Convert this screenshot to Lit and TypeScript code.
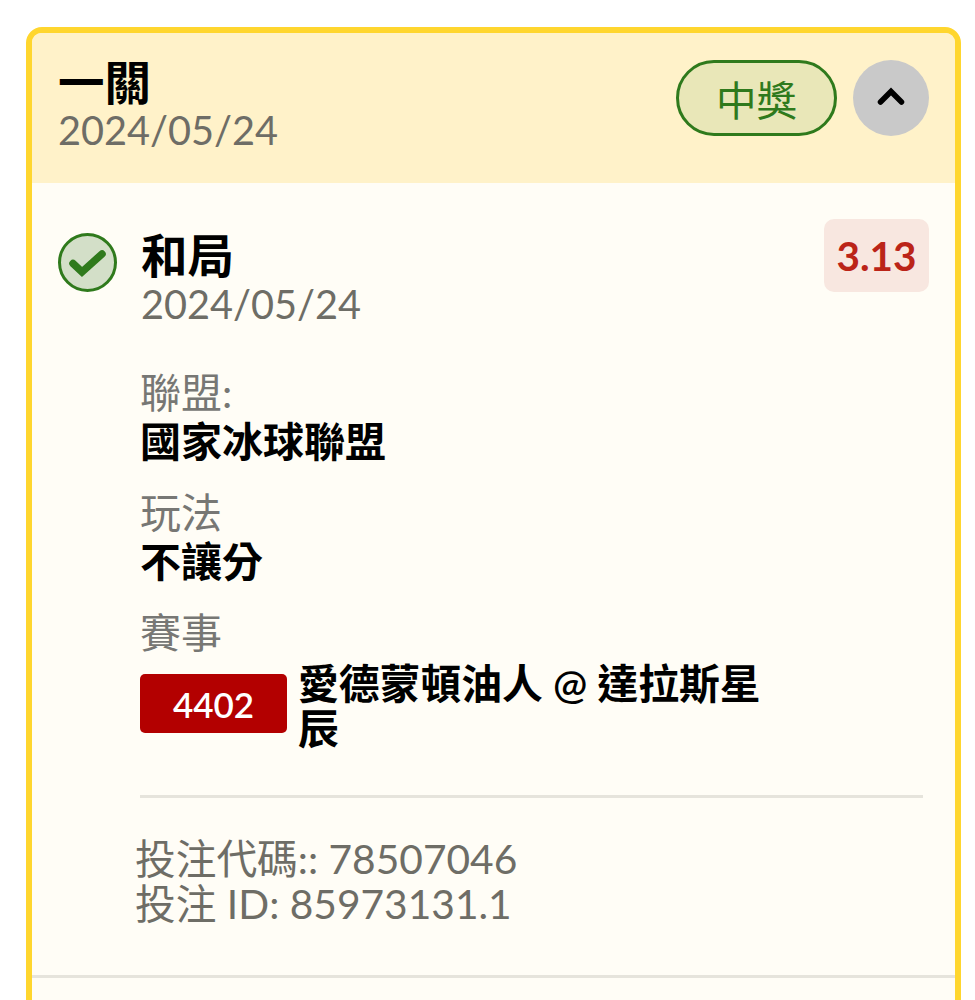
import { html, css, LitElement } from "lit";
import { customElement } from "lit/decorators.js";

@customElement("app-root")
export class AppRoot extends LitElement {
  static styles = css`
    :host {
      display: block;
      height: 1000px;
      overflow: hidden;
      background: #fff;
      font-family: Lato, "Noto Sans CJK TC", sans-serif;
      color: #000;
    }
    .Page {
      padding: 27px 14px 0 26px;
    }
    .Card {
      border: 6px solid #ffd62e;
      border-radius: 16px;
      background: #fffdf6;
      height: 1100px;
    }
    .Header {
      display: flex;
      justify-content: space-between;
      height: 150px;
      padding: 27px 26px 0 26px;
      box-sizing: border-box;
      background: #fff2c9;
      border-radius: 9px 9px 0 0;
    }
    .Header-text {
      margin-top: -2px;
    }
    .Title {
      font-size: 46.5px;
      line-height: 48px;
      font-weight: 600;
    }
    .Date {
      font-size: 39.7px;
      line-height: 48px;
      color: #6e6d66;
    }
    .Header-right {
      display: flex;
      gap: 16px;
    }
    .Badge {
      width: 161px;
      height: 76px;
      box-sizing: border-box;
      border: 3px solid #2f7a1c;
      border-radius: 38px;
      background: #e9e7b8;
      color: #2f7a1c;
      font-size: 40.5px;
      display: flex;
      align-items: center;
      justify-content: center;
    }
    .Toggle {
      width: 76px;
      height: 76px;
      border-radius: 50%;
      background: #c9c9c9;
      display: flex;
      align-items: center;
      justify-content: center;
    }
    .Body {
      padding: 36px 26px 0 26px;
    }
    .Bet-head {
      display: flex;
      align-items: flex-start;
    }
    .Check {
      margin-top: 14px;
      margin-right: 24px;
      flex: none;
    }
    .Bet-main {
      flex: 1;
      padding-top: 12px;
    }
    .Bet-main .Date {
      margin-top: 1px;
    }
    .Odds {
      width: 105px;
      height: 73px;
      border-radius: 10px;
      background: #f8e7e0;
      color: #bb2418;
      font-size: 40.5px;
      font-weight: 700;
      display: flex;
      align-items: center;
      justify-content: center;
    }
    .Details {
      padding-left: 82px;
      margin-top: 40px;
    }
    .Label {
      font-size: 41px;
      line-height: 50px;
      color: #777774;
    }
    .Value {
      font-size: 41px;
      line-height: 48px;
      font-weight: 600;
      margin-bottom: 22px;
    }
    .Event {
      display: flex;
      align-items: flex-start;
      gap: 11px;
      width: 632px;
    }
    .Event-id {
      flex: none;
      width: 147px;
      height: 59px;
      margin-top: 16px;
      border-radius: 5px;
      background: #b30000;
      color: #fff;
      font-size: 35px;
      font-weight: 600;
      display: flex;
      align-items: center;
      justify-content: center;
    }
    .Event-name {
      font-size: 40.8px;
      line-height: 45px;
      font-weight: 600;
      padding-top: 3px;
    }
    .Divider {
      height: 3px;
      background: #e6e4dc;
      margin: 44px 6px 0 82px;
    }
    .Codes {
      padding-left: 77px;
      margin-top: 38px;
      font-size: 40.7px;
      line-height: 45px;
      color: #6e6d66;
    }
    .Foot-line {
      height: 3px;
      background: #e6e4dc;
      margin-top: 49px;
    }
  `;

  render() {
    return html`<div class="Page">
      <div class="Card">
        <div class="Header">
          <div class="Header-text">
            <div class="Title">一關</div>
            <div class="Date">2024/05/24</div>
          </div>
          <div class="Header-right">
            <div class="Badge">中獎</div>
            <div class="Toggle">
              <svg width="32" height="22" viewBox="0 0 32 22">
                <path d="M5.5 15 L16 4.5 L26.5 15" fill="none" stroke="#000" stroke-width="5.5" stroke-linecap="round" stroke-linejoin="miter" />
              </svg>
            </div>
          </div>
        </div>
        <div class="Body">
          <div class="Bet-head">
            <svg class="Check" width="59" height="59" viewBox="0 0 59 59">
              <circle cx="29.5" cy="29.5" r="28" fill="#d3dfc8" stroke="#2f7a1c" stroke-width="3" />
              <path d="M15 30.5 L24 39 L44 21" fill="none" stroke="#2f7a1c" stroke-width="7.5" stroke-linecap="round" stroke-linejoin="miter" />
            </svg>
            <div class="Bet-main">
              <div class="Title">和局</div>
              <div class="Date">2024/05/24</div>
            </div>
            <div class="Odds">3.13</div>
          </div>
          <div class="Details">
            <div class="Label">聯盟:</div>
            <div class="Value">國家冰球聯盟</div>
            <div class="Label">玩法</div>
            <div class="Value">不讓分</div>
            <div class="Label">賽事</div>
            <div class="Event">
              <div class="Event-id">4402</div>
              <div class="Event-name">愛德蒙頓油人 @ 達拉斯星辰</div>
            </div>
          </div>
          <div class="Divider"></div>
          <div class="Codes">
            <div>投注代碼:: 78507046</div>
            <div>投注 ID: 85973131.1</div>
          </div>
        </div>
        <div class="Foot-line"></div>
      </div>
    </div>`;
  }
}
